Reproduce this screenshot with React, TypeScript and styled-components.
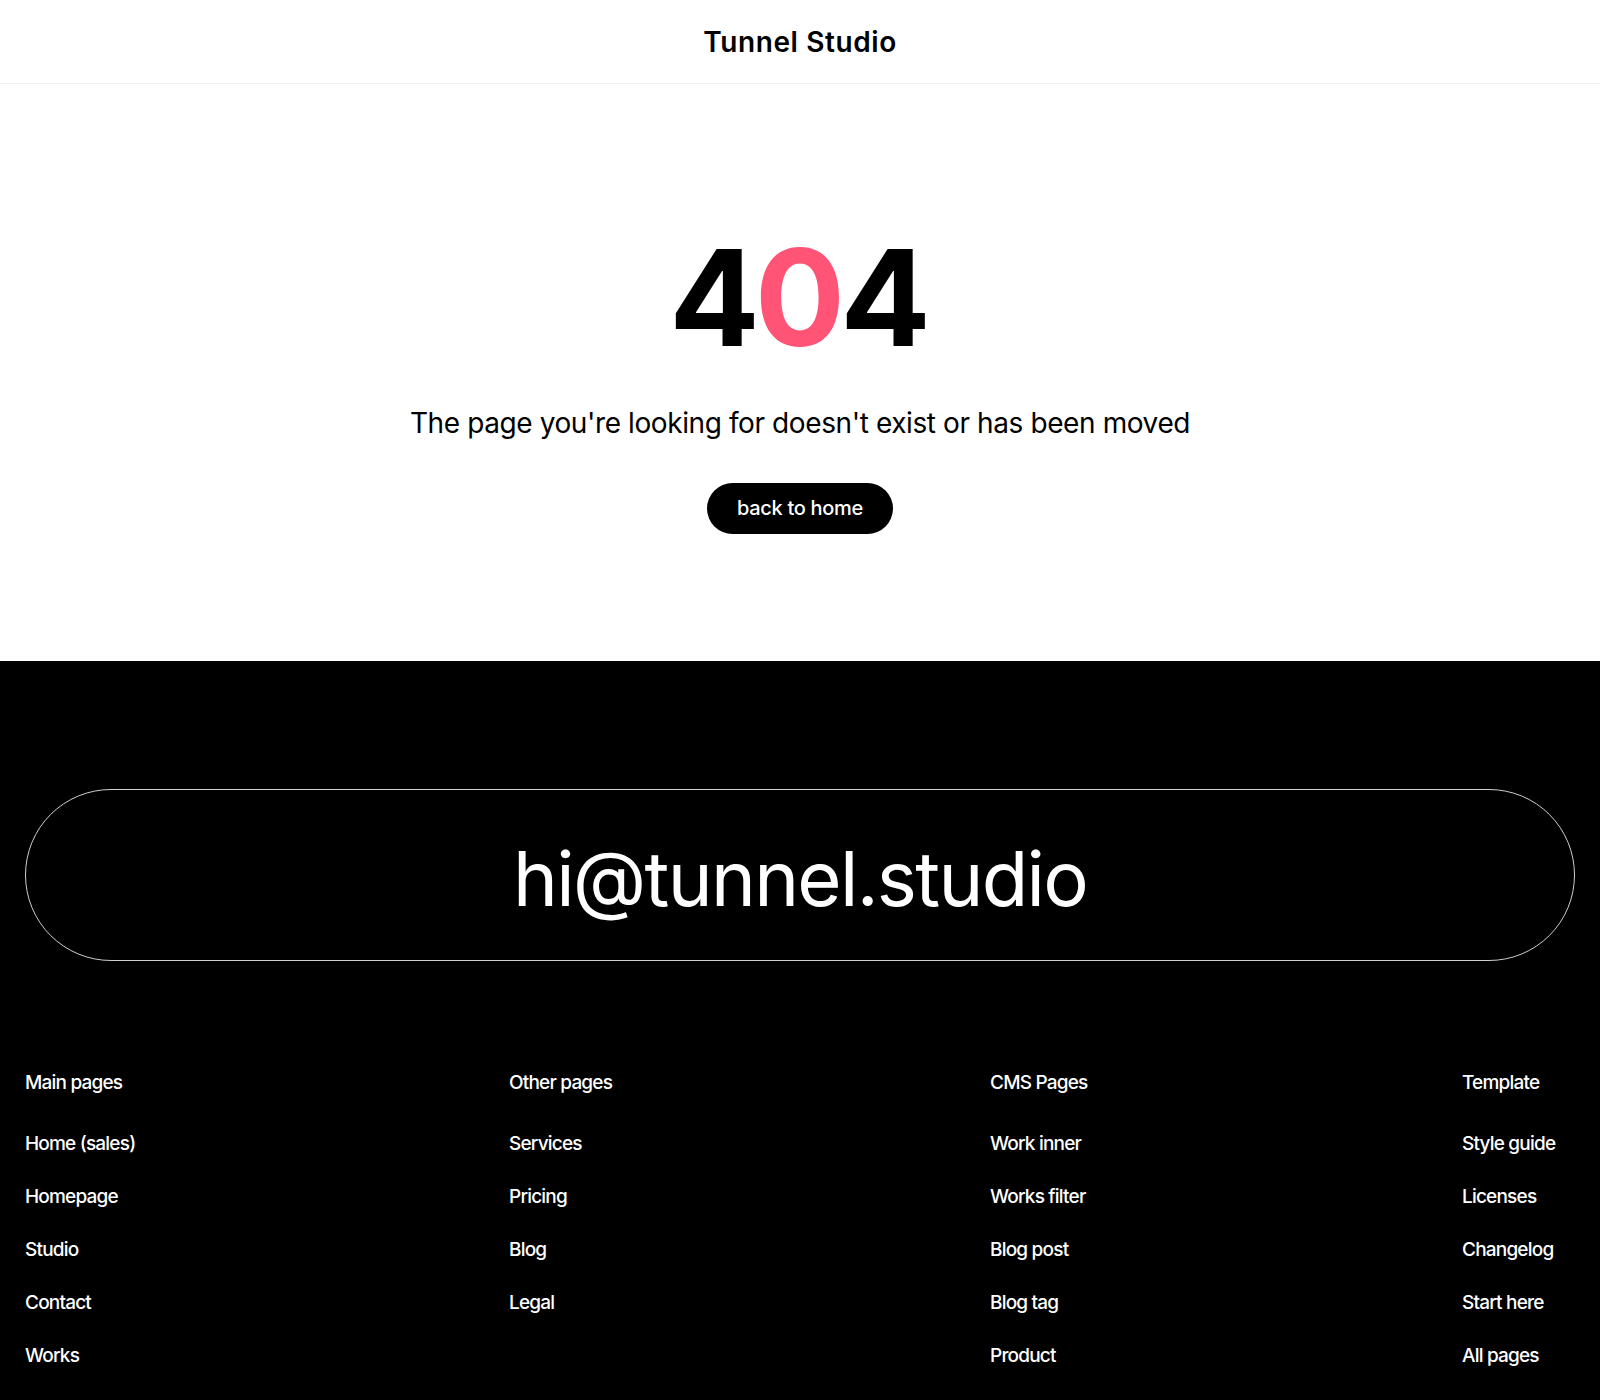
import React from "react";
import styled, { createGlobalStyle } from "styled-components";

const Global = createGlobalStyle`
  * { box-sizing: border-box; }
  html, body { margin: 0; padding: 0; background: #fff; }
  body { font-family: Inter, "Liberation Sans", sans-serif; color: #000; -webkit-font-smoothing: antialiased; }
  a { color: inherit; text-decoration: none; }
`;

const Header = styled.header`
  height: 84px;
  display: flex;
  align-items: center;
  justify-content: center;
  border-bottom: 1px solid #f1f1f1;
`;

const Brand = styled.a`
  font-size: 28px;
  font-weight: 600;
  letter-spacing: 0.6px;
  line-height: 1;
`;

const Main = styled.main`
  display: flex;
  flex-direction: column;
  align-items: center;
  padding: 146px 24px 127px;
`;

const Code = styled.h1`
  margin: 0;
  font-size: 134px;
  font-weight: 700;
  line-height: 1;
  letter-spacing: -5px;
  text-indent: -5px;
`;

const Accent = styled.span`
  color: #ff5476;
`;

const Message = styled.p`
  margin: 43px 0 0;
  font-size: 28px;
  line-height: 1.2;
  font-weight: 400;
  letter-spacing: -0.4px;
`;

const HomeButton = styled.a`
  margin-top: 42px;
  height: 51px;
  width: 186px;
  border-radius: 999px;
  background: #000;
  color: #fff;
  display: flex;
  align-items: center;
  justify-content: center;
  font-size: 20px;
  font-weight: 500;
  letter-spacing: -0.3px;
`;

const Footer = styled.footer`
  background: #000;
  color: #fff;
  padding: 128px 25px 40px;
`;

const EmailPill = styled.a`
  height: 172px;
  border: 1px solid #cfcfcf;
  border-radius: 999px;
  display: flex;
  align-items: center;
  justify-content: center;
  font-size: 76px;
  font-weight: 400;
  letter-spacing: -1.7px;
  line-height: 1;
  padding-top: 6px;
`;

const Columns = styled.nav`
  margin-top: 110px;
  display: grid;
  grid-template-columns: 484px 481px 472px 1fr;
`;

const Column = styled.div`
  display: flex;
  flex-direction: column;
`;

const ColTitle = styled.div`
  font-size: 19px;
  font-weight: 500;
  line-height: 24px;
  letter-spacing: -0.8px;
  margin-bottom: 37px;
`;

const ColLink = styled.a`
  font-size: 19px;
  font-weight: 500;
  line-height: 24px;
  letter-spacing: -0.8px;
  margin-bottom: 29px;
`;

const columns = [
  { title: "Main pages", links: ["Home (sales)", "Homepage", "Studio", "Contact", "Works"] },
  { title: "Other pages", links: ["Services", "Pricing", "Blog", "Legal"] },
  { title: "CMS Pages", links: ["Work inner", "Works filter", "Blog post", "Blog tag", "Product"] },
  { title: "Template", links: ["Style guide", "Licenses", "Changelog", "Start here", "All pages"] },
];

export default function App() {
  return (
    <>
      <Global />
      <Header>
        <Brand href="#">Tunnel Studio</Brand>
      </Header>
      <Main>
        <Code>
          4<Accent>0</Accent>4
        </Code>
        <Message>The page you're looking for doesn't exist or has been moved</Message>
        <HomeButton href="#">back to home</HomeButton>
      </Main>
      <Footer>
        <EmailPill href="#">hi@tunnel.studio</EmailPill>
        <Columns>
          {columns.map((c) => (
            <Column key={c.title}>
              <ColTitle>{c.title}</ColTitle>
              {c.links.map((l) => (
                <ColLink key={l} href="#">
                  {l}
                </ColLink>
              ))}
            </Column>
          ))}
        </Columns>
      </Footer>
    </>
  );
}
